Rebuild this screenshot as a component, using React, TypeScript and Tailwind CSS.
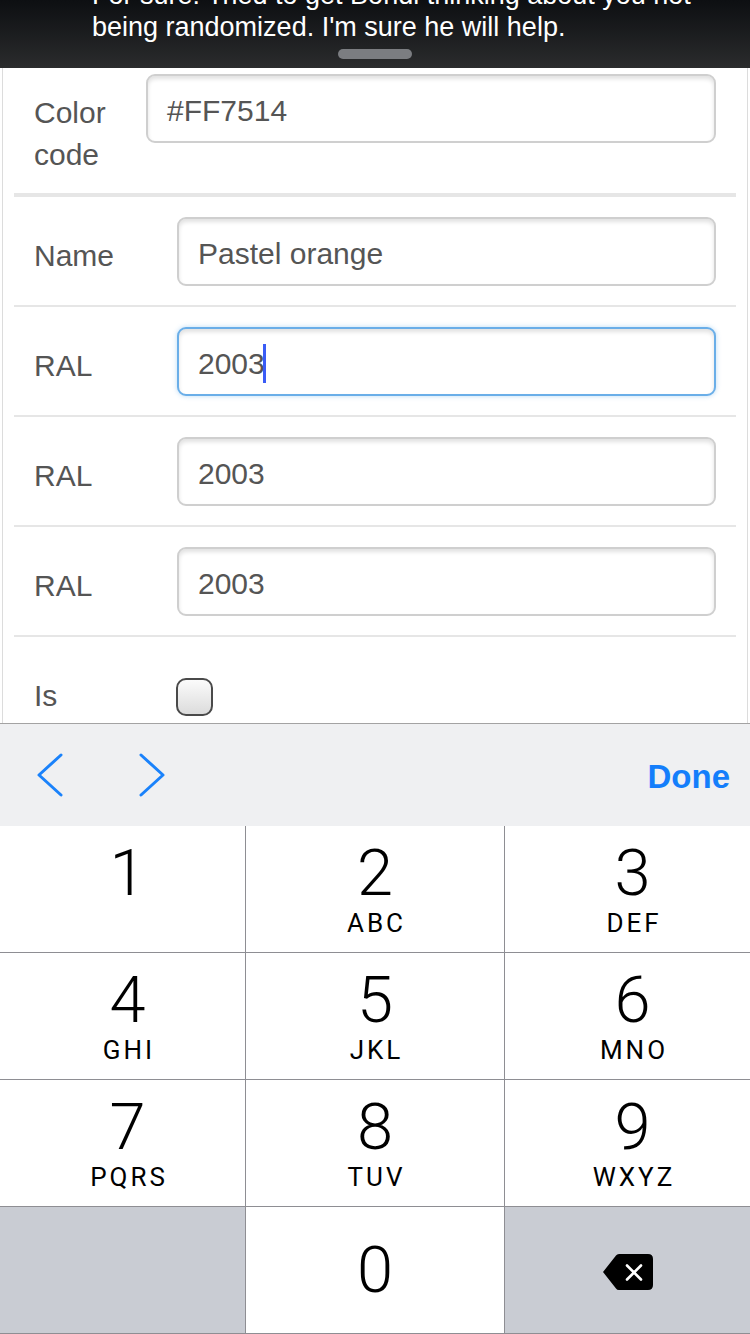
const rows = [
  { label: 'Name', value: 'Pastel orange', focused: false },
  { label: 'RAL', value: '2003', focused: true },
  { label: 'RAL', value: '2003', focused: false },
  { label: 'RAL', value: '2003', focused: false },
];

// side columns sit a little right of centre on the real keypad
const keys = [
  { digit: '1', letters: '', side: true },
  { digit: '2', letters: 'ABC', side: false },
  { digit: '3', letters: 'DEF', side: true },
  { digit: '4', letters: 'GHI', side: true },
  { digit: '5', letters: 'JKL', side: false },
  { digit: '6', letters: 'MNO', side: true },
  { digit: '7', letters: 'PQRS', side: true },
  { digit: '8', letters: 'TUV', side: false },
  { digit: '9', letters: 'WXYZ', side: true },
];

const FakeInput = ({ value, focused }: { value: string; focused?: boolean }) => (
  <div
    className={
      focused
        ? 'flex-1 h-[69px] flex items-center pl-[19px] pt-[3px] rounded-[9px] border-2 border-[#6aaee8] bg-white shadow-[inset_0_3px_4px_rgba(0,0,0,0.12),0_0_5px_rgba(102,175,233,0.45)] text-[30px] text-[#555555]'
        : 'flex-1 h-[69px] flex items-center pl-[19px] pt-[3px] rounded-[9px] border-2 border-[#cfcfcf] bg-white shadow-[inset_0_3px_4px_rgba(0,0,0,0.12)] text-[30px] text-[#555555]'
    }
  >
    <span>{value}</span>
    {focused ? <span className="inline-block w-[3px] h-[39px] -ml-[2px] bg-[#3a5cf6]" /> : null}
  </div>
);

const Chevron = ({ left }: { left?: boolean }) => (
  <svg width="28" height="44" viewBox="0 0 28 44" fill="none">
    <path
      d={left ? 'M25 2 L3 22 L25 42' : 'M3 2 L25 22 L3 42'}
      stroke="#1a82fb"
      strokeWidth="3"
      strokeLinecap="round"
      strokeLinejoin="round"
    />
  </svg>
);

const Backspace = () => (
  <svg width="52" height="38" viewBox="0 0 52 38">
    <path
      d="M1 19 L14 2.5 Q15 1 17 1 H46 Q51 1 51 6 V32 Q51 37 46 37 H17 Q15 37 14 35.5 Z"
      fill="#000000"
    />
    <path d="M25 12.5 L39 26.5 M39 12.5 L25 26.5" stroke="#ffffff" strokeWidth="2.6" strokeLinecap="round" />
  </svg>
);

export default function App() {
  return (
    <div className="w-[750px] h-[1334px] overflow-hidden bg-white font-['Liberation_Sans',Arial,sans-serif]">
      {/* notification banner */}
      <div className="h-[68px] overflow-hidden bg-gradient-to-b from-[#0d0f12] to-[#2b2c2d] flex flex-col">
        <div className="-mt-[21px] pl-[92px] text-[27px] leading-[32px] text-white whitespace-nowrap">
          <div>For sure! Tried to get Bondi thinking about you not</div>
          <div>being randomized. I'm sure he will help.</div>
        </div>
        <div className="self-center mt-[6px] w-[74px] h-[10px] rounded-full bg-[#7b7d81]" />
      </div>

      {/* form */}
      <div className="h-[655px] overflow-hidden px-[2px]">
        <div className="h-full border-x border-[#dcdcdc] px-[11px]">
          <div className="pt-[6px] pb-[17px] px-[20px] flex items-start">
            <div className="w-[112px] pt-[18px] text-[30px] leading-[42px] text-[#555555]">
              Color
              <br />
              code
            </div>
            <FakeInput value="#FF7514" />
          </div>
          <div className="h-[4px] bg-[#e6e6e6]" />

          {rows.map((row, i) => (
            <div key={i}>
              <div className="pt-[20px] pb-[19px] px-[20px] flex items-start">
                <div className="w-[143px] pt-[18px] text-[30px] leading-[42px] text-[#555555]">{row.label}</div>
                <FakeInput value={row.value} focused={row.focused} />
              </div>
              <div className="h-[2px] bg-[#e6e6e6]" />
            </div>
          ))}

          <div className="pt-[20px] px-[20px] flex items-start">
            <div className="w-[142px] pt-[18px] text-[30px] leading-[42px] text-[#555555]">Is</div>
            <div className="mt-[21px] w-[37px] h-[38px] rounded-[10px] border-2 border-[#4a4a4a] bg-gradient-to-b from-[#fbfbfb] to-[#dcdcdc]" />
          </div>
        </div>
      </div>

      {/* keyboard toolbar */}
      <div className="h-px bg-[#a3a3a3]" />
      <div className="h-[102px] bg-[#eff0f2] flex items-center pl-[36px] pr-[20px]">
        <Chevron left />
        <div className="ml-[74px]">
          <Chevron />
        </div>
        <div className="ml-auto pt-[4px] text-[33px] font-bold text-[#147efb]">Done</div>
      </div>

      {/* number pad */}
      <div className="grid grid-cols-[245px_258px_245px] grid-rows-[126px_126px_126px_126px] gap-px bg-[#8e8e93] pb-px font-['Roboto',Arial,sans-serif]">
        {keys.map((k) => (
          <div
            key={k.digit}
            className={
              k.side
                ? 'bg-white flex flex-col items-center pt-[15px] pl-[10px] text-black'
                : 'bg-white flex flex-col items-center pt-[15px] text-black'
            }
          >
            <div className="text-[65px] leading-[64px] font-light">{k.digit}</div>
            {k.letters ? (
              <div className="mt-[5px] text-[26px] leading-[26px] tracking-[3px] pl-[3px]">{k.letters}</div>
            ) : null}
          </div>
        ))}
        <div className="bg-[#c9ccd3]" />
        <div className="bg-white flex items-center justify-center text-black">
          <div className="text-[65px] leading-[64px] font-light">0</div>
        </div>
        <div className="bg-[#c9ccd3] flex items-center justify-center pt-[4px]">
          <Backspace />
        </div>
      </div>
    </div>
  );
}
